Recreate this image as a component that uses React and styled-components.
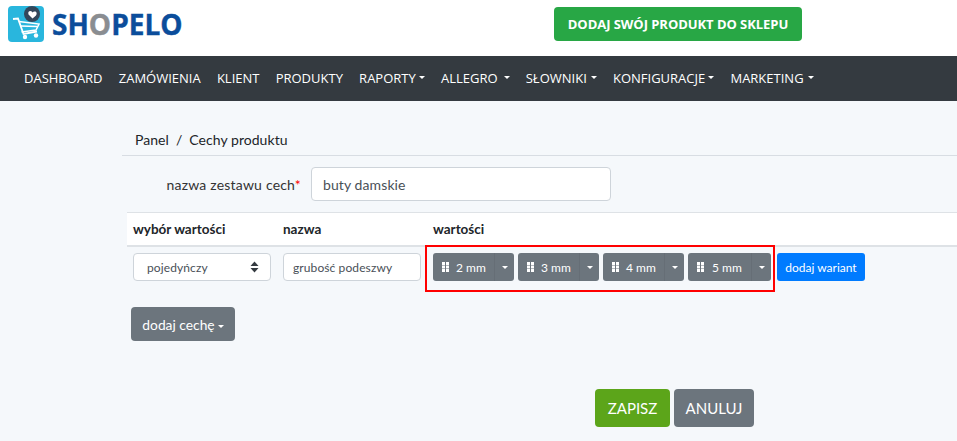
import React from "react";
import styled, { createGlobalStyle } from "styled-components";

const GlobalStyle = createGlobalStyle`
  html, body {
    margin: 0;
    padding: 0;
    height: 441px;
    overflow: hidden;
    background: #f5f8fb;
    font-family: "Lato", "Liberation Sans", sans-serif;
    color: #212529;
  }
  * { box-sizing: border-box; }
`;

const Header = styled.header`
  height: 56px;
  background: #fff;
  display: flex;
  align-items: flex-start;
  padding: 6px 0 0 8px;
`;

const LogoWrap = styled.div`
  display: flex;
  align-items: center;
  gap: 8px;
  width: 546px;
`;

const LogoText = styled.div`
  font-family: "Open Sans", sans-serif;
  font-weight: 700;
  font-size: 28px;
  letter-spacing: 0;
  color: #0b4d9b;
  line-height: 1;
  margin-top: -1px;
  -webkit-text-stroke: 0.4px currentColor;
  span { color: #8a8d91; }
`;

const AddProduct = styled.button`
  width: 248px;
  height: 34px;
  margin-top: 1px;
  border: 0;
  border-radius: 4px;
  background: #28a745;
  color: #fff;
  font-family: "Open Sans", sans-serif;
  font-weight: 700;
  font-size: 13px;
  letter-spacing: -0.05px;
  padding: 0;
`;

const Nav = styled.nav`
  height: 45px;
  background: #343a40;
  display: flex;
  align-items: center;
  padding: 0 0 2px 24px;
  gap: 16.2px;
`;

const NavItem = styled.a`
  font-family: "Open Sans", sans-serif;
  font-size: 13px;
  color: #fff;
  display: flex;
  align-items: center;
  white-space: nowrap;
`;

const Caret = styled.i`
  display: inline-block;
  vertical-align: middle;
  margin-left: ${(p) => p.$gap || 0}px;
  border-top: 3.5px solid #fff;
  border-left: 3px solid transparent;
  border-right: 3px solid transparent;
`;

const Main = styled.main`
  padding: 0 0 0 122px;
`;

const Breadcrumb = styled.div`
  height: 55px;
  padding: 30px 0 0 13px;
  font-size: 14px;
  letter-spacing: 0.05px;
  line-height: 18px;
  border-bottom: 1px solid #d8dde3;
  display: flex;
  gap: 7px;
`;

const SetRow = styled.div`
  display: flex;
  align-items: center;
  margin-top: 11px;
  height: 34px;
`;

const SetLabel = styled.label`
  width: 189px;
  text-align: right;
  font-size: 14px;
  letter-spacing: 0.2px;
  padding-right: 10px;
  color: #333;
  b { color: #f00; font-weight: 400; }
`;

const Input = styled.div`
  background: #fff;
  border: 1px solid #ced4da;
  border-radius: 4px;
  display: flex;
  align-items: center;
  color: #495057;
  width: ${(p) => p.$width}px;
  height: ${(p) => p.$height}px;
  padding-left: ${(p) => p.$pad}px;
  font-size: ${(p) => p.$size}px;
  letter-spacing: 0.1px;
`;

const SelectBox = styled(Input)`
  justify-content: space-between;
  padding-right: 11px;
`;

const Table = styled.div`
  margin: 11px 0 0 5px;
`;

const HeadRow = styled.div`
  height: 35px;
  background: #fff;
  border-top: 1px solid #dee2e6;
  border-bottom: 2px solid #dee2e6;
  display: flex;
  align-items: center;
`;

const HeadCell = styled.div`
  width: 150px;
  padding-left: 6px;
  font-size: 13.5px;
  font-weight: 700;
`;

const BodyRow = styled.div`
  display: flex;
  align-items: flex-start;
  padding: 6px 0 0 6px;
  gap: 12px;
`;

const Values = styled.div`
  display: flex;
  align-items: flex-start;
  margin-left: -8px;
`;

const Marked = styled.div`
  display: flex;
  gap: 4px;
  width: 350px;
  height: 47px;
  margin-top: -8px;
  padding: 6px 0 0 6px;
  border: 2px solid #f00;
`;

const ValueButton = styled.div`
  display: flex;
  width: ${(p) => p.$width}px;
  height: 28px;
  border-radius: 3px;
  background: #6c757d;
  color: #fff;
  font-size: 12px;
  overflow: hidden;
`;

const ValueMain = styled.div`
  flex: 1;
  display: flex;
  align-items: center;
  padding-left: 9px;
  gap: ${(p) => p.$gap}px;
`;

const ValueToggle = styled.div`
  width: 20px;
  display: flex;
  align-items: center;
  justify-content: center;
  border-left: 1px solid #666e76;
`;

const AddVariant = styled.button`
  margin-left: 2px;
  width: 88px;
  height: 28px;
  border: 0;
  border-radius: 3px;
  background: #007bff;
  color: #fff;
  font-family: inherit;
  font-size: 12px;
  padding: 0;
`;

const Button = styled.button`
  border: 0;
  border-radius: 4px;
  background: ${(p) => p.$bg || "#6c757d"};
  color: #fff;
  font-family: inherit;
  font-size: ${(p) => p.$size || 14}px;
  width: ${(p) => p.$width}px;
  height: ${(p) => p.$height}px;
  padding: 0;
`;

const AddFeature = styled(Button)`
  display: block;
  margin: 15px 0 0 9px;
`;

const Actions = styled.div`
  display: flex;
  gap: 4px;
  margin: 48px 0 0 473px;
`;

const Grip = () => (
  <svg width="7" height="10" viewBox="0 0 7 10" fill="#fff">
    <rect x="0" y="0" width="3" height="3" />
    <rect x="4" y="0" width="3" height="3" />
    <rect x="0" y="3.5" width="3" height="3" />
    <rect x="4" y="3.5" width="3" height="3" />
    <rect x="0" y="7" width="3" height="3" />
    <rect x="4" y="7" width="3" height="3" />
  </svg>
);

const SortIcon = () => (
  <svg width="9" height="12" viewBox="0 0 9 12" fill="#343a40">
    <path d="M4.5 0.5 L8.5 5 H0.5 Z" />
    <path d="M4.5 11.5 L8.5 7 H0.5 Z" />
  </svg>
);

const CartLogo = () => (
  <svg width="36" height="36" viewBox="0 0 36 36">
    <rect width="36" height="36" rx="4" fill="#29b6dd" />
    <circle cx="24" cy="8" r="8" fill="#33475b" />
    <path d="M24.5 12.5 L20.5 8.5 Q19.5 5 22.5 5 Q24 5 24.5 6.5 Q25.5 5 27.5 5.5 Q29.5 6.5 28 9.5 Z" fill="#fff" />
    <path d="M5 13 L10 12.5 L15.5 28 L29 25.5" fill="none" stroke="#fff" strokeWidth="1.8" />
    <path d="M11 15.5 L31 18 L28 24 L13.5 26" fill="none" stroke="#fff" strokeWidth="1.5" />
    <path d="M12.5 20 L29 20.5" stroke="#fff" strokeWidth="1.3" />
    <circle cx="17" cy="31" r="2.2" fill="#fff" />
    <circle cx="28" cy="29.5" r="2.2" fill="#fff" />
  </svg>
);

const navItems = [
  ["DASHBOARD"],
  ["ZAMÓWIENIA"],
  ["KLIENT"],
  ["PRODUKTY"],
  ["RAPORTY", 3],
  ["ALLEGRO", 6],
  ["SŁOWNIKI", 4],
  ["KONFIGURACJE", 3],
  ["MARKETING", 4],
];

const values = [
  ["2 mm", 81, 7],
  ["3 mm", 81, 7],
  ["4 mm", 81, 7],
  ["5 mm", 83, 8],
];

export default function App() {
  return (
    <>
      <GlobalStyle />
      <Header>
        <LogoWrap>
          <CartLogo />
          <LogoText>
            SH<span>O</span>PELO
          </LogoText>
        </LogoWrap>
        <AddProduct>DODAJ SWÓJ PRODUKT DO SKLEPU</AddProduct>
      </Header>
      <Nav>
        {navItems.map(([label, gap]) => (
          <NavItem key={label}>
            {label}
            {gap && <Caret $gap={gap} />}
          </NavItem>
        ))}
      </Nav>
      <Main>
        <Breadcrumb>
          <span>Panel</span>
          <span>/</span>
          <span>Cechy produktu</span>
        </Breadcrumb>
        <SetRow>
          <SetLabel>
            nazwa zestawu cech<b>*</b>
          </SetLabel>
          <Input $width={300} $height={34} $pad={11} $size={14}>
            buty damskie
          </Input>
        </SetRow>
        <Table>
          <HeadRow>
            <HeadCell>wybór wartości</HeadCell>
            <HeadCell>nazwa</HeadCell>
            <HeadCell>wartości</HeadCell>
          </HeadRow>
          <BodyRow>
            <SelectBox $width={138} $height={28} $pad={13} $size={12}>
              pojedyńczy
              <SortIcon />
            </SelectBox>
            <Input $width={138} $height={28} $pad={9} $size={12}>
              grubość podeszwy
            </Input>
            <Values>
              <Marked>
                {values.map(([label, width, gap]) => (
                  <ValueButton key={label} $width={width}>
                    <ValueMain $gap={gap}>
                      <Grip />
                      {label}
                    </ValueMain>
                    <ValueToggle>
                      <Caret />
                    </ValueToggle>
                  </ValueButton>
                ))}
              </Marked>
              <AddVariant>dodaj wariant</AddVariant>
            </Values>
          </BodyRow>
        </Table>
        <AddFeature $width={104} $height={34} $size={13.8}>
          dodaj cechę
          <Caret $gap={3} />
        </AddFeature>
        <Actions>
          <Button $bg="#5ca51a" $width={75} $height={38} $size={15}>
            ZAPISZ
          </Button>
          <Button $width={80} $height={38} $size={15}>
            ANULUJ
          </Button>
        </Actions>
      </Main>
    </>
  );
}
